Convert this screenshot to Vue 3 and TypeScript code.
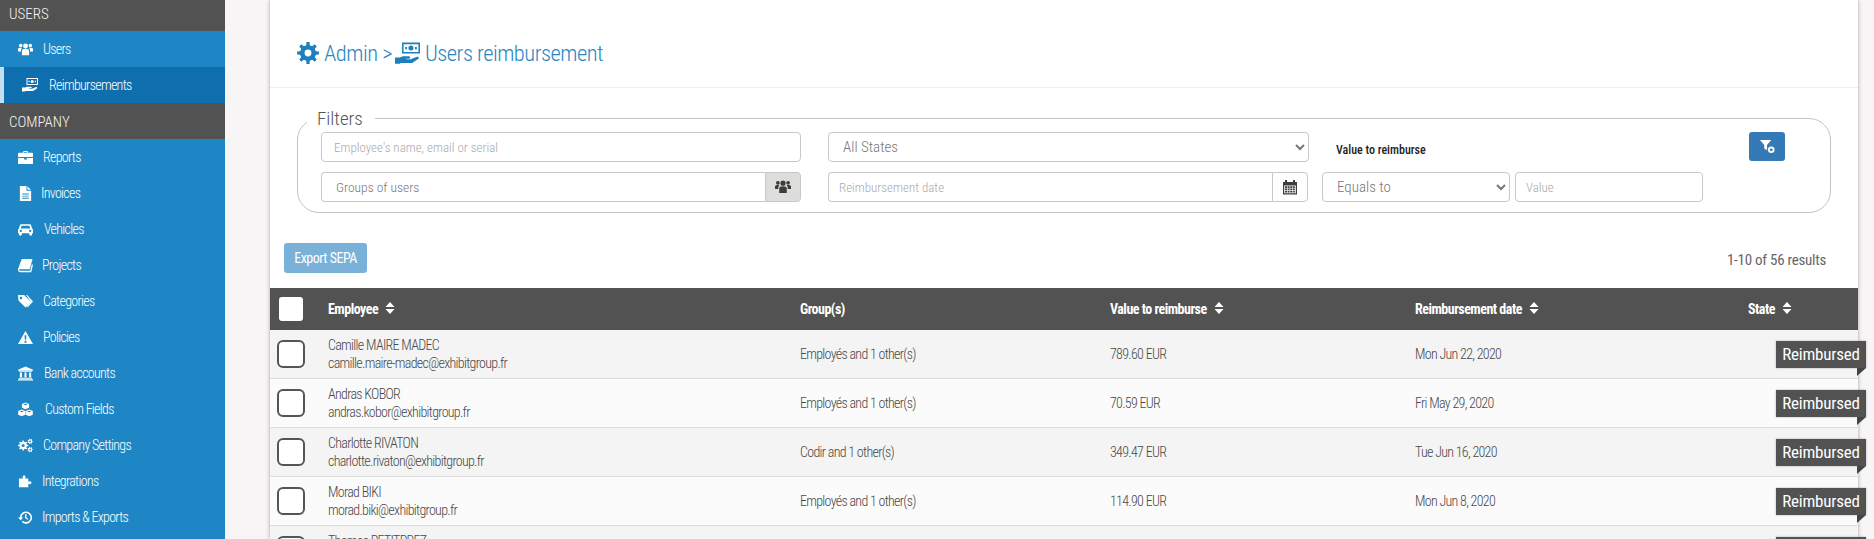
<script setup lang="ts">
function gear(cx: number, cy: number, R: number, r: number, hole: number, teeth: number): string {
  const pts: string[] = []
  const step = (Math.PI * 2) / teeth
  for (let i = 0; i < teeth; i++) {
    const a = i * step
    const list: [number, number][] = [
      [r, a - step * 0.5],
      [r, a - step * 0.28],
      [R, a - step * 0.18],
      [R, a + step * 0.18],
      [r, a + step * 0.28],
    ]
    for (const [rad, an] of list) {
      pts.push(`${(cx + rad * Math.cos(an)).toFixed(2)} ${(cy + rad * Math.sin(an)).toFixed(2)}`)
    }
  }
  const ring = `M${pts.join('L')}Z`
  const h = `M${cx - hole} ${cy}a${hole} ${hole} 0 1 0 ${hole * 2} 0a${hole} ${hole} 0 1 0 ${-hole * 2} 0Z`
  return ring + h
}

function calendar(): string {
  let d = 'M1 3h2V1h2v2h6V1h2v2h2v12.5H1zM2.2 6.5v7.8h11.6V6.5z'
  for (let r = 0; r < 3; r++) {
    for (let c = 0; c < 4; c++) {
      d += `M${3 + c * 2.6} ${7.3 + r * 2.3}h2v1.6h-2z`
    }
  }
  return d
}

const icons: Record<string, string> = {
  users:
    'M8 1.6a2.6 2.6 0 1 0 0 5.2 2.6 2.6 0 0 0 0-5.2zM2.9 1.9a1.9 1.9 0 1 0 0 3.8 1.9 1.9 0 0 0 0-3.8zM13.1 1.9a1.9 1.9 0 1 0 0 3.8 1.9 1.9 0 0 0 0-3.8zM4.2 14V9.5C4.2 8 5.5 7.2 8 7.2s3.8.8 3.8 2.3V14zM0 10V7.5C0 6.5 1 6 3 6c.5 0 1 .1 1.3.2C3.6 7 3.2 8 3.2 9.5V10zM16 10V7.5C16 6.5 15 6 13 6c-.5 0-1 .1-1.3.2.7.8 1.1 1.8 1.1 3.3V10z',
  money:
    'M4.5 1H16v7H4.5zM5.5 2v5H15V2zM10.2 2.9a1.6 1.6 0 1 0 0 3.2 1.6 1.6 0 0 0 0-3.2zM6.5 3.8h1.2v1.4H6.5zM12.8 3.8H14v1.4h-1.2zM0 10.6h3l2-.9h4c1 0 1 1.6 0 1.6H7v.4h3l4-1.6c1-.4 1.7.7 1 1.3l-4 2.7H3.5l-.5.4H0z',
  briefcase:
    'M5.5 3V1.8c0-.4.3-.8.8-.8h3.4c.5 0 .8.4.8.8V3H15c.6 0 1 .4 1 1v3.5H0V4c0-.6.4-1 1-1zM6.5 3h3V2h-3zM0 8.5h6.5V10h3V8.5H16V14c0 .6-.4 1-1 1H1c-.6 0-1-.4-1-1z',
  file: 'M2 0h7v5h5v11H2zM10 .3 13.7 4H10zM4.5 8v1h7V8zM4.5 10.3v1h7v-1zM4.5 12.6v1h7v-1z',
  car: 'M3.5 2.5h9c.8 0 1.3.5 1.5 1.2L15 7c.6.3 1 .9 1 1.5V12h-1v1.5c0 .5-.9 1-1.6 1s-1.4-.5-1.4-1V12H4v1.5c0 .5-.7 1-1.4 1S1 14 1 13.5V12H0V8.5C0 7.9.4 7.3 1 7l1-3.3c.2-.7.7-1.2 1.5-1.2zM3.8 4 3 7h10l-.8-3zM3 8.3a1.2 1.2 0 1 0 0 2.4 1.2 1.2 0 0 0 0-2.4zM13 8.3a1.2 1.2 0 1 0 0 2.4 1.2 1.2 0 0 0 0-2.4z',
  book: 'M4 1h11.5l-3 11H2c-.6 0-.9.5-.7 1 .1.4.5.7 1 .7H13l1.7-7 1.3.6-1.9 7.9H2.5C1 15.2 0 14 0 12.5c0-.5 0-.7.2-1.2z',
  tags: 'M0 1h6.5L14 8.5l-6 6L.5 7zM3.2 3a1.3 1.3 0 1 0 0 2.6 1.3 1.3 0 0 0 0-2.6zM8.5 1h1.2L16 8l-5.5 6-1-.8L14 8.5z',
  warning: 'M8 1l8 14H0zM7 5.5l.3 5h1.4l.3-5zM7 11.5v2h2v-2z',
  bank: 'M8 .5 16 4v1H0V4zM1 5.5h14v1H1zM2 7h2.2v5H2zM6.9 7h2.2v5H6.9zM11.8 7H14v5h-2.2zM1 12.5h14v1H1zM0 14h16v1.5H0z',
  cubes:
    'M8 .5l3.8 1.6v4L8 7.7 4.2 6.1v-4zM8 1.7 5.8 2.6 8 3.5l2.2-.9zM4 8l3.8 1.6v4L4 15.2.2 13.6v-4zM4 9.2l-2.2.9 2.2.9 2.2-.9zM12 8l3.8 1.6v4L12 15.2l-3.8-1.6v-4zM12 9.2l-2.2.9 2.2.9 2.2-.9z',
  cogs: gear(5.5, 8, 5.4, 4, 1.7, 8) + gear(13, 3.6, 2.9, 2.1, 0.9, 7) + gear(13, 12.4, 2.9, 2.1, 0.9, 7),
  puzzle:
    'M5 3c0-1 .5-1.5 1.5-1.5S8 2 8 3c0 .5-.3 1-.3 1.3 0 .2.2.4.5.4H11v3c0 .3.2.5.5.5.3 0 .8-.4 1.3-.4 1 0 1.5.6 1.5 1.5s-.5 1.5-1.5 1.5c-.5 0-1-.4-1.3-.4-.3 0-.5.2-.5.5V14H1V4.7h3.8c.3 0 .5-.2.5-.4C5.3 4 5 3.5 5 3z',
  history:
    'M2 8A6.5 6.5 0 1 1 4 12.8L5 11.4A4.8 4.8 0 1 0 3.7 8H5.6L2.8 11 0 8zM7.5 4.5H9V8l2 1.5-.8 1-2.7-2z',
  cog: gear(8, 8, 8, 5.8, 2.5, 8),
  filter:
    'M0 1h12L7.5 6.5V12L4.5 10V6.5zM12 8a3.5 3.5 0 1 0 0 7 3.5 3.5 0 0 0 0-7zM12 10a1.5 1.5 0 1 1 0 3 1.5 1.5 0 0 1 0-3z',
  calendar: calendar(),
}

interface NavItem {
  label: string
  icon: string
  textX: number
  iconW: number
}

const userItems: NavItem[] = [{ label: 'Users', icon: 'users', textX: 43, iconW: 15 }]
const companyItems: NavItem[] = [
  { label: 'Reports', icon: 'briefcase', textX: 42, iconW: 14 },
  { label: 'Invoices', icon: 'file', textX: 40, iconW: 14 },
  { label: 'Vehicles', icon: 'car', textX: 44, iconW: 15 },
  { label: 'Projects', icon: 'book', textX: 41, iconW: 14 },
  { label: 'Categories', icon: 'tags', textX: 43, iconW: 15 },
  { label: 'Policies', icon: 'warning', textX: 42, iconW: 14 },
  { label: 'Bank accounts', icon: 'bank', textX: 44, iconW: 15 },
  { label: 'Custom Fields', icon: 'cubes', textX: 46, iconW: 16 },
  { label: 'Company Settings', icon: 'cogs', textX: 43, iconW: 15 },
  { label: 'Integrations', icon: 'puzzle', textX: 41, iconW: 14 },
  { label: 'Imports & Exports', icon: 'history', textX: 40, iconW: 13 },
]

const columns = ['Employee', 'Group(s)', 'Value to reimburse', 'Reimbursement date', 'State']
const sortable = [true, false, true, true, true]

const rows = [
  { name: 'Camille MAIRE MADEC', email: 'camille.maire-madec@exhibitgroup.fr', group: 'Employés and 1 other(s)', value: '789.60 EUR', date: 'Mon Jun 22, 2020' },
  { name: 'Andras KOBOR', email: 'andras.kobor@exhibitgroup.fr', group: 'Employés and 1 other(s)', value: '70.59 EUR', date: 'Fri May 29, 2020' },
  { name: 'Charlotte RIVATON', email: 'charlotte.rivaton@exhibitgroup.fr', group: 'Codir and 1 other(s)', value: '349.47 EUR', date: 'Tue Jun 16, 2020' },
  { name: 'Morad BIKI', email: 'morad.biki@exhibitgroup.fr', group: 'Employés and 1 other(s)', value: '114.90 EUR', date: 'Mon Jun 8, 2020' },
  { name: 'Thomas PETITPREZ', email: 'thomas.petitprez@exhibitgroup.fr', group: 'Employés and 1 other(s)', value: '96.20 EUR', date: 'Mon Jun 8, 2020' },
]
</script>

<template>
  <div class="page">
    <aside class="sidebar">
      <div class="nav">
        <div class="nav-head">USERS</div>
        <a v-for="item in userItems" :key="item.label" class="nav-item">
          <svg class="nav-icon" viewBox="0 0 16 16"><path :d="icons[item.icon]" fill-rule="evenodd" /></svg>
          <span :style="{ marginLeft: item.textX - 18 - item.iconW + 'px' }">{{ item.label }}</span>
        </a>
        <a class="nav-item active">
          <svg class="nav-icon money" viewBox="0 0 16 16"><path :d="icons.money" fill-rule="evenodd" /></svg>
          <span class="active-label">Reimbursements</span>
        </a>
        <div class="nav-head">COMPANY</div>
        <a v-for="item in companyItems" :key="item.label" class="nav-item">
          <svg class="nav-icon" viewBox="0 0 16 16"><path :d="icons[item.icon]" fill-rule="evenodd" /></svg>
          <span :style="{ marginLeft: item.textX - 18 - item.iconW + 'px' }">{{ item.label }}</span>
        </a>
      </div>
    </aside>

    <main class="main">
      <section class="card">
        <header class="title-bar">
          <h1 class="title">
            <svg class="t-cog" viewBox="0 0 16 16"><path :d="icons.cog" fill-rule="evenodd" /></svg>
            <span>Admin &gt;</span>
            <svg class="t-money" viewBox="0 0 16 16"><path :d="icons.money" fill-rule="evenodd" /></svg>
            <span>Users reimbursement</span>
          </h1>
        </header>

        <fieldset class="filters">
          <legend>Filters</legend>
          <div class="filter-grid">
            <input class="ctl search" placeholder="Employee's name, email or serial" />
            <select class="ctl state"><option>All States</option></select>
            <label class="value-label">Value to reimburse</label>
            <button class="filter-btn" aria-label="Reset filters">
              <svg viewBox="0 0 16 16"><path :d="icons.filter" fill-rule="evenodd" /></svg>
            </button>
            <div class="group groups">
              <input class="ctl joined dark" placeholder="Groups of users" />
              <span class="addon grey">
                <svg viewBox="0 0 16 16"><path :d="icons.users" fill-rule="evenodd" /></svg>
              </span>
            </div>
            <div class="group date">
              <input class="ctl joined" placeholder="Reimbursement date" />
              <span class="addon">
                <svg viewBox="0 0 16 16"><path :d="icons.calendar" fill-rule="evenodd" /></svg>
              </span>
            </div>
            <select class="ctl equals"><option>Equals to</option></select>
            <input class="ctl amount" placeholder="Value" />
          </div>
        </fieldset>

        <div class="toolbar">
          <button class="export">Export SEPA</button>
          <span class="results">1-10 of 56 results</span>
        </div>

        <table class="grid">
          <colgroup>
            <col class="c0" /><col class="c1" /><col class="c2" /><col class="c3" /><col class="c4" /><col />
          </colgroup>
          <thead>
            <tr>
              <th class="check-cell"><input type="checkbox" class="check-all" /></th>
              <th v-for="(c, i) in columns" :key="c">
                <span class="th-in">
                  {{ c }}
                  <svg v-if="sortable[i]" class="sort" viewBox="0 0 10 12"><path d="M5 0l4.5 5H.5zM5 12 .5 7h9z" /></svg>
                </span>
              </th>
            </tr>
          </thead>
          <tbody>
            <tr v-for="r in rows" :key="r.email">
              <td class="check-cell"><input type="checkbox" class="check" /></td>
              <td>
                <div class="name">{{ r.name }}</div>
                <div class="email">{{ r.email }}</div>
              </td>
              <td>{{ r.group }}</td>
              <td>{{ r.value }}</td>
              <td>{{ r.date }}</td>
              <td class="state-cell"><span class="badge">Reimbursed</span></td>
            </tr>
          </tbody>
        </table>
      </section>
    </main>
  </div>
</template>

<style>
html,
body {
  margin: 0;
  overflow: hidden;
  background: #f7f5f6;
}
</style>

<style scoped>
.page {
  display: flex;
  height: 539px;
  overflow: hidden;
  font-family: Roboto, sans-serif;
  font-stretch: 75%;
  font-weight: 300;
  background: #f7f5f6;
  color: #555;
}
.sidebar {
  flex: 0 0 225px;
  background: #1e86c4;
  color: #fff;
  overflow: hidden;
}
.nav {
  margin-top: -5px;
}
.nav-head {
  box-sizing: border-box;
  height: 36px;
  line-height: 36px;
  padding: 1px 0 0 9px;
  background: #525252;
  font-size: 15px;
  color: #f4f4f4;
}
.nav-item {
  display: flex;
  align-items: center;
  height: 36px;
  padding-left: 18px;
  font-size: 14px;
  letter-spacing: -0.7px;
}
.nav-icon {
  width: 15px;
  height: 15px;
  flex: none;
  fill: #fff;
}
.nav-item.active {
  background: #0f6fae;
  border-left: 4px solid #c5dff0;
  padding-left: 18px;
}
.nav-icon.money {
  width: 16px;
  height: 16px;
}
.active-label {
  margin-left: 11px;
}

.main {
  flex: 1;
  min-width: 0;
  padding-left: 45px;
  padding-right: 16px;
}
.card {
  background: #fff;
  height: 539px;
  box-shadow: 0 0 4px rgba(0, 0, 0, 0.35);
}
.title-bar {
  height: 87px;
  border-bottom: 1px solid #eee;
  display: flex;
  align-items: center;
  padding-left: 27px;
}
.title {
  margin: 19px 0 0;
  display: flex;
  align-items: center;
  font-size: 22.5px;
  font-weight: 300;
  letter-spacing: -0.5px;
  color: #2a86c4;
}
.t-cog {
  width: 22px;
  height: 22px;
  fill: #1e7fbe;
  margin-right: 5px;
}
.t-money {
  width: 25px;
  height: 25px;
  fill: #1e7fbe;
  margin: 0 5px 0 3px;
}

.filters {
  margin: 17px 27px 0 27px;
  padding: 0 23px 10px;
  border: 1px solid #c4c4c4;
  border-radius: 22px;
  min-width: 0;
}
.filters legend {
  margin-left: -14px;
  padding: 2px 12px 0 10px;
  font-size: 19px;
  line-height: 24px;
  color: #555;
}
.filter-grid {
  display: grid;
  grid-template-columns: 480px 508px 201px 193px 82px;
  grid-template-rows: 30px 30px;
  row-gap: 10px;
  margin-top: 1px;
}
.ctl {
  box-sizing: border-box;
  width: 100%;
  height: 100%;
  border: 1px solid #c8c8c8;
  border-radius: 4px;
  background: #fff;
  font: inherit;
  font-size: 13px;
  color: #777;
  padding: 0 10px;
  outline: none;
}
.ctl::placeholder {
  color: #aaa;
  opacity: 1;
}
.ctl.dark::placeholder {
  color: #777;
}
.search {
  grid-column: 1;
  grid-row: 1;
  padding-left: 12px;
}
.state {
  grid-column: 2;
  grid-row: 1;
  margin-left: 27px;
  width: calc(100% - 27px);
  font-size: 15px;
}
.value-label {
  grid-column: 3 / 5;
  grid-row: 1;
  align-self: center;
  margin: 5px 0 0 27px;
  font-size: 12px;
  font-weight: 500;
  color: #222;
}
.filter-btn {
  grid-column: 5;
  grid-row: 1;
  margin-left: 46px;
  width: 36px;
  height: 29px;
  border: none;
  border-radius: 3px;
  background: #337ab7;
  display: flex;
  align-items: center;
  justify-content: center;
  padding: 0;
}
.filter-btn svg {
  width: 15px;
  height: 15px;
  fill: #fff;
}
.group {
  display: flex;
  min-width: 0;
}
.groups {
  grid-column: 1;
  grid-row: 2;
}
.date {
  grid-column: 2;
  grid-row: 2;
  margin-left: 27px;
  margin-right: 1px;
}
.joined {
  flex: 1;
  min-width: 0;
  border-radius: 4px 0 0 4px;
  border-right: none;
}
.groups .joined {
  padding-left: 14px;
  font-size: 13.5px;
}
.addon {
  flex: 0 0 36px;
  box-sizing: border-box;
  display: flex;
  align-items: center;
  justify-content: center;
  border: 1px solid #c8c8c8;
  border-radius: 0 4px 4px 0;
  background: #fff;
}
.addon.grey {
  background: #dddddb;
}
.addon svg {
  width: 16px;
  height: 16px;
  fill: #3d3d3d;
}
.equals {
  grid-column: 3;
  grid-row: 2;
  margin-left: 13px;
  width: calc(100% - 13px);
  font-size: 15px;
}
.amount {
  grid-column: 4;
  grid-row: 2;
  margin-left: 5px;
  width: calc(100% - 5px);
}

.toolbar {
  display: flex;
  align-items: center;
  justify-content: space-between;
  margin: 30px 32px 0 14px;
  height: 30px;
}
.export {
  width: 83px;
  height: 30px;
  border: none;
  border-radius: 3px;
  background: #7ab1d8;
  color: #fff;
  font: inherit;
  font-size: 14px;
  font-weight: 400;
  letter-spacing: -0.5px;
  padding: 0;
}
.results {
  font-size: 15px;
  font-weight: 400;
  letter-spacing: -0.25px;
  color: #666;
  margin-top: 4px;
}

.grid {
  width: 100%;
  margin-top: 15px;
  border-collapse: collapse;
  table-layout: fixed;
  font-size: 14px;
  letter-spacing: -0.7px;
}
.c0 {
  width: 58px;
}
.c1 {
  width: 472px;
}
.c2 {
  width: 310px;
}
.c3 {
  width: 305px;
}
.c4 {
  width: 333px;
}
.grid th {
  height: 42px;
  padding: 0;
  background: #525252;
  color: #fff;
  text-align: left;
  font-weight: 700;
  font-size: 14px;
  letter-spacing: -0.5px;
}
.th-in {
  display: inline-flex;
  align-items: center;
  gap: 7px;
}
.sort {
  width: 10px;
  height: 12px;
  fill: #fff;
  margin-top: -3px;
}
.grid td {
  height: 48px;
  padding: 0;
  border-bottom: 1px solid #ddd;
  color: #484848;
}
.grid tbody tr:nth-child(odd) td {
  background: #f4f4f4;
}
.grid tbody tr:nth-child(even) td {
  background: #fbfbfb;
}
.name {
  line-height: 18px;
}
.email {
  line-height: 18px;
}
.grid .check-cell {
  padding-left: 7px;
}
.check,
.check-all {
  appearance: none;
  display: block;
  margin: 0;
  background: #fff;
}
.check {
  box-sizing: border-box;
  width: 28px;
  height: 28px;
  border: 2px solid #555;
  border-radius: 6px;
}
.check-all {
  width: 24px;
  height: 24px;
  margin-left: 2px;
  border-radius: 3px;
}
.grid td.state-cell {
  text-align: right;
}
.badge {
  position: relative;
  display: inline-block;
  box-sizing: border-box;
  width: 90px;
  height: 27px;
  line-height: 27px;
  margin-right: -8px;
  text-align: center;
  background: #525252;
  color: #fff;
  font-size: 17px;
  font-weight: 400;
  letter-spacing: -0.2px;
  box-shadow: 0 0 2px rgba(0, 0, 0, 0.3);
}
.badge::after {
  content: "";
  position: absolute;
  right: 0;
  bottom: -8px;
  width: 0;
  height: 0;
  border-top: 8px solid #444;
  border-right: 9px solid transparent;
}
</style>
